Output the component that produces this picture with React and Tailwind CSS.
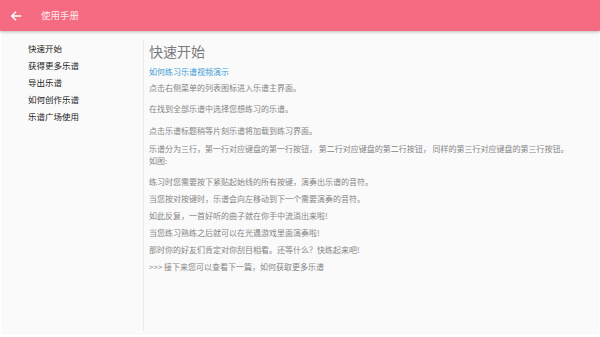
import React from "react";

const font = { fontFamily: '"Noto Sans CJK SC", "Noto Sans", sans-serif' };

export default function App() {
  const side = ["快速开始", "获得更多乐谱", "导出乐谱", "如何创作乐谱", "乐谱广场使用"];
  return (
    <div className="w-[600px] h-[337px] bg-white flex flex-col overflow-hidden" style={font}>
      <div className="h-[31px] bg-[#f56c82] flex items-center shrink-0 shadow-[0_1px_3px_rgba(0,0,0,0.25)] relative z-10">
        <svg width="12" height="12" viewBox="0 0 24 24" className="ml-[10px]" fill="none" stroke="white" strokeWidth="3" strokeLinecap="square">
          <path d="M21 12H4M11 4.5L3.5 12L11 19.5" />
        </svg>
        <span className="ml-[19px] text-[9.5px] text-[#fde7ea] leading-none">使用手册</span>
      </div>
      <div className="flex-1 mx-[1px] mb-[2px] bg-[#fafafa] flex">
        <div className="w-[142px] pt-[10px] pl-[27px] flex flex-col gap-[2px] text-[8.5px] text-[#222] leading-[15px]">
          {side.map((s) => (
            <div key={s}>{s}</div>
          ))}
        </div>
        <div className="w-[1px] bg-[#ececec] mt-[8px] mb-[4px]" />
        <div className="flex-1 pl-[5px] pt-[10px] text-[8px] text-[#858585] leading-[12px]">
          <div className="text-[14px] text-[#7a7a7a] leading-[20px]">快速开始</div>
          <div className="mt-[5px] text-[#3b9bd6]">如何练习乐谱视频演示</div>
          <div className="mt-[4px]">点击右侧菜单的列表图标进入乐谱主界面。</div>
          <div className="mt-[9px]">在找到全部乐谱中选择您想练习的乐谱。</div>
          <div className="mt-[10px]">点击乐谱标题稍等片刻乐谱将加载到练习界面。</div>
          <div className="mt-[6px]">乐谱分为三行，第一行对应键盘的第一行按钮， 第二行对应键盘的第二行按钮， 同样的第三行对应键盘的第三行按钮。</div>
          <div className="mt-[0px]">如图:</div>
          <div className="mt-[9px]">练习时您需要按下紧贴起始线的所有按键，演奏出乐谱的音符。</div>
          <div className="mt-[5px]">当您按对按键时，乐谱会向左移动到下一个需要演奏的音符。</div>
          <div className="mt-[5px]">如此反复，一首好听的曲子就在你手中流淌出来啦!</div>
          <div className="mt-[5px]">当您练习熟练之后就可以在光遇游戏里面演奏啦!</div>
          <div className="mt-[5px]">那时你的好友们肯定对你刮目相看。还等什么？快练起来吧!</div>
          <div className="mt-[5px]">&gt;&gt;&gt; 接下来您可以查看下一篇，如何获取更多乐谱</div>
        </div>
      </div>
    </div>
  );
}
